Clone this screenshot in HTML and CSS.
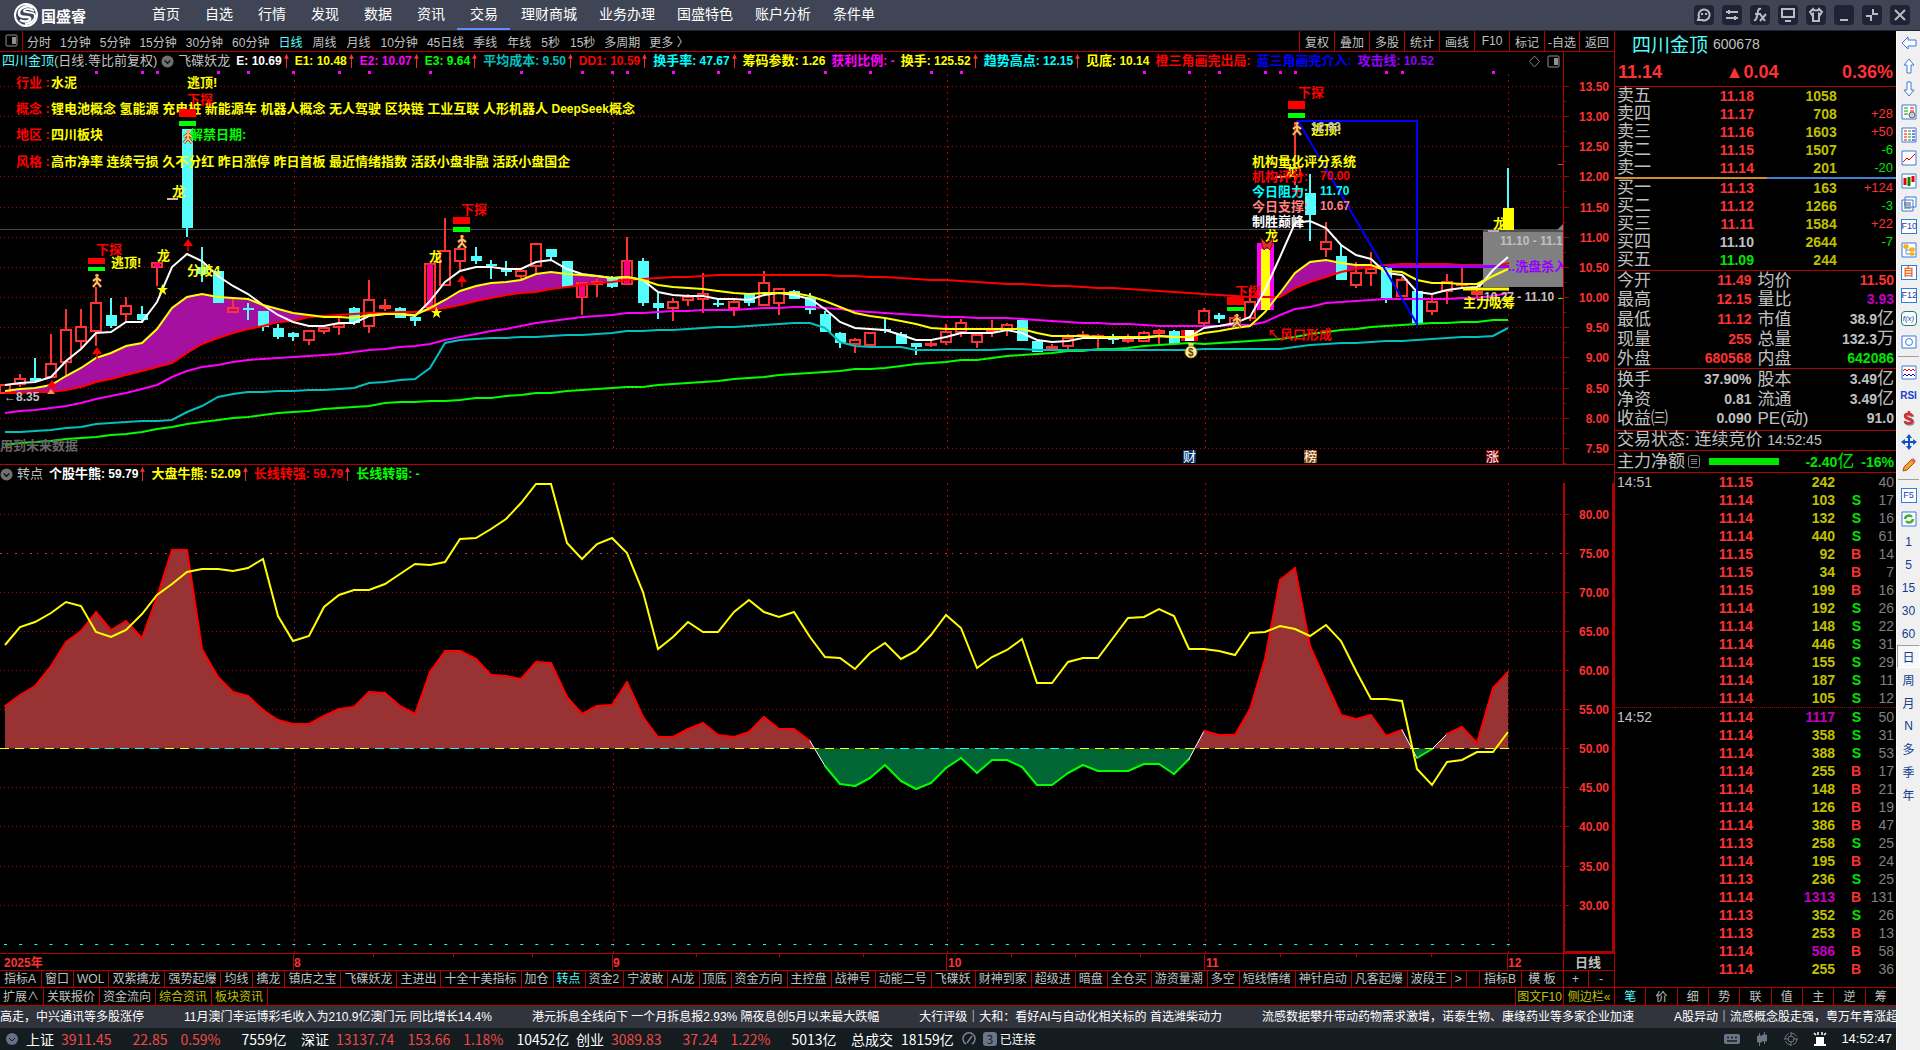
FILE: index.html
```html
<!DOCTYPE html>
<html lang="zh-CN">
<head>
  <meta charset="UTF-8" />
  <meta name="viewport" content="width=device-width, initial-scale=1.0"/>
  <title>国盛睿</title>
  <link rel="stylesheet" href="styles.css">
</head>
<body>
  <svg class="defs" width="0" height="0" aria-hidden="true">
    <symbol id="up" viewBox="0 0 5 15"><path d="M2.5 1v14" stroke="#ff3232"/><path d="M0 5L2.5 0 5 5z" fill="#ff3232"/></symbol>
    <symbol id="chev" viewBox="0 0 14 14"><circle cx="7" cy="7" r="6.5" fill="#707070"/><path d="M4 6l3 3 3-3" fill="none" stroke="#111" stroke-width="1.5"/></symbol>
    <symbol id="pane" viewBox="0 0 13 13"><rect x="1" y="1" width="11" height="11" rx="1" fill="none" stroke="#909090"/><path d="M7 3h4v7H7z" fill="#909090"/></symbol>
    <symbol id="runner" viewBox="0 0 12 15"><circle cx="6" cy="2.5" r="1.8" fill="#ffb040"/><path d="M6 4v5L2 14M6 9l4 5M6 5L2 8M6 5l4 3" fill="none" stroke="#7a3c10" stroke-width="3"/><path d="M6 4v5L2 14M6 9l4 5M6 5L2 8M6 5l4 3" fill="none" stroke="#ffc070" stroke-width="1.8"/></symbol>
    <symbol id="mark" viewBox="0 0 10 12"><path d="M5 0l5 7H0z" fill="#f00"/><path d="M5 6v6" stroke="#f00" stroke-width="1.5"/></symbol>
    <symbol id="star" viewBox="0 0 12 12"><path d="M6 0l1.7 4.3H12L8.5 7.2 10 12 6 9 2 12l1.5-4.8L0 4.3h4.3z" fill="#ff0"/></symbol>
  </svg>

  <header class="titlebar">
    <div class="logo">
      <svg width="26" height="26" viewBox="0 0 26 26" fill="none" stroke="#fff">
        <circle cx="13" cy="13" r="11" stroke-width="2"/>
        <path d="M20 6C14 2 6 6 6 11c0 4 4 4 8 4s4 3 1 4-6 0-8-1" stroke-width="2.5"/>
        <path d="M21 9c-5-3-10-2-10 0s10 0 11 4-4 9-10 9" stroke-width="2"/>
      </svg>
      <span>国盛睿</span>
    </div>
    <nav>
      <a href="#">首页</a>
      <a href="#">自选</a>
      <a href="#">行情</a>
      <a href="#">发现</a>
      <a href="#">数据</a>
      <a href="#">资讯</a>
      <a href="#" class="active">交易</a>
      <a href="#" class="wide">理财商城</a>
      <a href="#" class="wide">业务办理</a>
      <a href="#" class="wide">国盛特色</a>
      <a href="#" class="wide">账户分析</a>
      <a href="#" class="wide">条件单</a>
    </nav>
    <div class="window-buttons">
      <button aria-label="客服"><svg viewBox="0 0 20 20"><path d="M4 15l1-3a5.5 5.5 0 1 1 3 3z"/><path d="M8 8v2M12 8v2"/></svg></button>
      <button aria-label="切换"><svg viewBox="0 0 20 20"><path d="M4 7h12M4 13h12M7 5v4M13 11v4"/></svg></button>
      <button aria-label="公式"><svg viewBox="0 0 20 20"><path d="M11 4c-3-1-3 2-3.5 5S6 16 4 15M5 9h6M10 9l5 7M16 9l-6 7"/></svg></button>
      <button aria-label="屏幕"><svg viewBox="0 0 20 20"><path d="M4 4h12v8H4zM7 16h6"/></svg></button>
      <button aria-label="皮肤"><svg viewBox="0 0 20 20"><path d="M7 4L4 7l2 3 1-1v7h6V9l1 1 2-3-3-3c-1 2-5 2-6 0z"/></svg></button>
      <button aria-label="最小化"><svg viewBox="0 0 20 20"><path d="M6 15h8"/></svg></button>
      <button aria-label="还原"><svg viewBox="0 0 20 20"><path d="M4 11h5v5M11 4v5h5"/></svg></button>
      <button aria-label="关闭"><svg viewBox="0 0 20 20"><path d="M5 5l10 10M15 5L5 15"/></svg></button>
    </div>
  </header>

  <div class="workspace">
    <div class="left">
      <div class="desk">
        <main class="charts">
          <div class="period-bar">
            <button class="pane-toggle" aria-label="侧栏"><svg width="13" height="13"><use href="#pane"/></svg></button>
            <div class="periods">
              <button>分时</button><button>1分钟</button><button>5分钟</button><button>15分钟</button><button>30分钟</button><button>60分钟</button><button class="unit active">日线</button><button class="unit">周线</button><button class="unit">月线</button><button>10分钟</button><button>45日线</button><button class="unit">季线</button><button class="unit">年线</button><button class="unit">5秒</button><button>15秒</button><button>多周期</button><button>更多 〉</button>
            </div>
            <div class="chart-actions">
              <button>复权</button><button>叠加</button><button>多股</button><button>统计</button><button>画线</button><button>F10</button><button>标记</button><button>-自选</button><button>返回</button>
            </div>
          </div>

          <div class="indicator-row top-row">
            <span class="name"><span><b class="stock">四川金顶</b>(日线.等比前复权)</span><svg width="13" height="13"><use href="#chev"/></svg>飞碟妖龙</span>
            <span class="ind white"><i>E: 10.69</i><svg><use href="#up"/></svg></span>
            <span class="ind yellow"><i>E1: 10.48</i><svg><use href="#up"/></svg></span>
            <span class="ind magenta"><i>E2: 10.07</i><svg><use href="#up"/></svg></span>
            <span class="ind green"><i>E3: 9.64</i><svg><use href="#up"/></svg></span>
            <span class="ind teal">平均成本<i>: 9.50</i><svg><use href="#up"/></svg></span>
            <span class="ind red"><i>DD1: 10.59</i><svg><use href="#up"/></svg></span>
            <span class="ind cyan">换手率<i>: 47.67</i><svg><use href="#up"/></svg></span>
            <span class="ind yellow">筹码参数<i>: 1.26</i></span>
            <span class="ind magenta">获利比例<i>: -</i></span>
            <span class="ind yellow">换手<i>: 125.52</i><svg><use href="#up"/></svg></span>
            <span class="ind cyan">趋势高点<i>: 12.15</i><svg><use href="#up"/></svg></span>
            <span class="ind yellow">见底<i>: 10.14</i></span>
            <span class="ind red">橙三角画完出局<i>:</i></span>
            <span class="ind blue">蓝三角画完介入<i>:</i></span>
            <span class="ind violet">攻击线<i>: 10.52</i></span>
            <span class="row-tools">
              <svg width="13" height="13" viewBox="0 0 13 13"><path d="M6.5 1l5 5.5-5 5.5-5-5.5z" fill="none" stroke="#808080"/></svg>
              <svg width="13" height="13"><use href="#pane"/></svg>
            </span>
          </div>

          <svg class="price-chart" viewBox="0 70 1614 394" preserveAspectRatio="xMinYMin meet">
            <g id="priceGrid"></g>
            <g id="priceData"></g>

            <!-- trend triangle -->
            <path d="M1298 121h119L1417 324z" fill="none" stroke="#00f" stroke-width="2"/>

            <!-- cost range box -->
            <rect x="1483" y="232" width="80" height="55" fill="#808080"/>
            <path d="M1483 231h80" stroke="#a0a0a0"/>
            <path d="M1557 230l6-6v6z" fill="#808080"/>
            <path d="M1387 266.5h122" stroke="#9600ff" stroke-width="3"/>
            <path d="M1463 289h46" stroke="#ff0" stroke-width="3"/>
            <path d="M1479 287L1493 270 1508 257" fill="none" stroke="#fff" stroke-width="2"/>
            <path d="M1479 284L1493 276 1508 269" fill="none" stroke="#ff0" stroke-width="2"/>
            <path d="M1501 265l8-2" stroke="#f00" stroke-width="2"/>
            <clipPath id="plotClip"><rect x="0" y="70" width="1563" height="394"/></clipPath>
            <g clip-path="url(#plotClip)">
              <text class="num" x="1500" y="245" fill="#c0c0c0">11.10 - 11.10</text>
              <text x="1508" y="271" fill="#9600ff">..洗盘杀入</text>
              <text class="num" x="1484" y="301" fill="#c0c0c0">10.27 - 11.10</text>
              <text x="1463" y="307" fill="#ff0">主力吸筹</text>
            </g>

            <!-- company notes -->
            <g fill="#f00">
              <text x="16" y="87">行业 :</text>
              <text x="16" y="113">概念 :</text>
              <text x="16" y="139">地区 :</text>
              <text x="16" y="166">风格 :</text>
            </g>
            <g fill="#ff0">
              <text x="51" y="87">水泥</text>
              <text x="51" y="113">锂电池概念 氢能源 充电桩 新能源车 机器人概念 无人驾驶 区块链 工业互联 人形机器人 <tspan class="num">DeepSeek</tspan>概念</text>
              <text x="51" y="139">四川板块</text>
              <text x="51" y="166">高市净率 连续亏损 久不分红 昨日涨停 昨日首板 最近情绪指数 活跃小盘非融 活跃小盘国企</text>
              <text x="187" y="87">逃顶!</text>
              <text x="111" y="267">逃顶!</text>
              <text x="1311" y="134">逃顶!</text>
              <text x="172" y="196">龙</text>
              <text x="157" y="260">龙</text>
              <text x="429" y="261">龙</text>
              <text x="1285" y="175">龙</text>
              <text x="1265" y="240">龙</text>
              <text x="1493" y="228">龙</text>
              <text x="187" y="275">分歧4</text>
            </g>
            <text x="190" y="139" fill="#0f0">解禁日期:</text>
            <g class="num" fill="#c0c0c0">
              <text x="4" y="401">←8.35</text>
              <text x="1311" y="131">12.93</text>
            </g>
            <text x="0" y="450" fill="#686868">用到未来数据</text>

            <!-- sell signals -->
            <g fill="#f00">
              <text x="96" y="254">下探</text><rect x="88" y="258" width="17" height="6"/>
              <text x="187" y="104">下探</text><rect x="179" y="109" width="17" height="8"/>
              <text x="461" y="214">下探</text><rect x="453" y="217" width="17" height="7"/>
              <text x="1235" y="296">下探</text><rect x="1227" y="297" width="17" height="8"/>
              <text x="1298" y="97">下探</text><rect x="1288" y="101" width="17" height="8"/>
              <text x="1267" y="339">↖风口形成</text>
            </g>
            <g fill="#0f0">
              <rect x="88" y="267" width="17" height="4"/>
              <rect x="179" y="121" width="17" height="5"/>
              <rect x="453" y="227" width="17" height="5"/>
              <rect x="1227" y="307" width="17" height="4"/>
              <rect x="1288" y="113" width="17" height="5"/>
            </g>
            <use href="#runner" x="91" y="273" width="12" height="15"/>
            <use href="#runner" x="182" y="129" width="12" height="15"/>
            <use href="#runner" x="456" y="234" width="12" height="15"/>
            <use href="#runner" x="1231" y="313" width="12" height="15"/>
            <use href="#runner" x="1291" y="121" width="12" height="15"/>
            <use href="#mark" x="92" y="347" width="10" height="12"/>
            <use href="#mark" x="183" y="239" width="10" height="12"/>
            <use href="#mark" x="457" y="275" width="10" height="12"/>
            <use href="#mark" x="1292" y="185" width="10" height="12"/>
            <use href="#mark" x="47" y="380" width="10" height="12"/>
            <path d="M51 389l4 5h-8z" fill="#ff9050"/>
            <use href="#star" x="157" y="284" width="11" height="11"/>
            <use href="#star" x="431" y="307" width="11" height="11"/>

            <!-- money bag and butterfly -->
            <g>
              <path d="M1188 343h6l-1 4h-4z" fill="#e8d870"/>
              <circle cx="1191" cy="352" r="6" fill="#fff2a8" stroke="#a08820"/>
              <text class="small" x="1188" y="356" fill="#604000">$</text>
              <path d="M1267 244l-6-6 1 7 2 5 3-3 3 3 2-5 1-7z" fill="#e03020" stroke="#701008"/>
            </g>

            <!-- scoring panel -->
            <text x="1252" y="166" fill="#ff0">机构量化评分系统</text>
            <text x="1252" y="181" fill="#f00">机构评分:</text>
            <text x="1252" y="196" fill="#0ff">今日阻力:</text>
            <text x="1252" y="211" fill="#ff8080">今日支撑:</text>
            <text x="1252" y="226" fill="#fff">制胜巅峰</text>
            <g class="num">
              <text x="1320" y="180" fill="#f00">70.00</text>
              <text x="1320" y="195" fill="#0ff">11.70</text>
              <text x="1320" y="210" fill="#ff8080">10.67</text>
            </g>

            <!-- event badges -->
            <rect x="1183" y="450" width="13" height="13" fill="#003870"/>
            <rect x="1304" y="450" width="13" height="13" fill="#884400"/>
            <rect x="1486" y="450" width="13" height="13" fill="#800000"/>
            <g class="badge" fill="#fff">
              <text x="1183" y="461">财</text>
              <text x="1304" y="461">榜</text>
              <text x="1486" y="461">涨</text>
            </g>
          </svg>

          <div class="indicator-row sub-row">
            <span class="name"><svg width="13" height="13"><use href="#chev"/></svg>转点</span>
            <span class="ind white">个股牛熊<i>: 59.79</i><svg><use href="#up"/></svg></span>
            <span class="ind yellow">大盘牛熊<i>: 52.09</i><svg><use href="#up"/></svg></span>
            <span class="ind red">长线转强<i>: 59.79</i><svg><use href="#up"/></svg></span>
            <span class="ind green">长线转弱<i>: -</i></span>
          </div>

          <svg class="trend-chart" viewBox="0 484 1614 470" preserveAspectRatio="xMinYMin meet">
            <g id="trendGrid"></g>
            <g id="trendData"></g>
          </svg>

          <div class="date-axis">
            <svg viewBox="0 954 1614 16" preserveAspectRatio="xMinYMin meet">
              <path d="M373.5 954v3M453.5 954v3M532.5 954v3M696.5 954v3M779.5 954v3M863.5 954v3M1011.5 954v3M1075.5 954v3M1140.5 954v3M1280.5 954v3M1356.5 954v3M1431.5 954v3M293.5 954v16M612.5 954v16M946.5 954v16M1204.5 954v16M1507.5 954v16M1563.5 954v16" stroke="#b00000"/>
              <g class="num" fill="#ff3232">
                <text x="4" y="967">2025年</text>
                <text x="294" y="967">8</text>
                <text x="613" y="967">9</text>
                <text x="948" y="967">10</text>
                <text x="1206" y="967">11</text>
                <text x="1508" y="967">12</text>
              </g>
              <text x="1575" y="967" fill="#c0c0c0">日线</text>
            </svg>
          </div>

          <div class="tabs">
            <button class="first">指标A</button><button>窗口</button><button>WOL</button><button>双紫擒龙</button><button>强势起爆</button><button>均线</button><button>擒龙</button><button>镇店之宝</button><button>飞碟妖龙</button><button>主进出</button><button>十全十美指标</button><button>加仓</button><button class="active">转点</button><button>资金2</button><button>宁波敢</button><button>AI龙</button><button>顶底</button><button>资金方向</button><button>主控盘</button><button>战神号</button><button>动能二号</button><button>飞碟妖</button><button>财神到家</button><button>超级进</button><button>暗盘</button><button>全仓买</button><button>游资量潮</button><button>多空</button><button>短线情绪</button><button>神针启动</button><button>凡客起爆</button><button>波段王</button><button>&gt;</button>
            <div class="tabs-end">
              <button class="b">指标B</button><button class="b">模 板</button><button class="zoom">+</button><button class="zoom">-</button>
            </div>
          </div>
          <div class="tabs">
            <button>扩展∧</button><button>关联报价</button><button>资金流向</button><button class="gold">综合资讯</button><button class="gold">板块资讯</button>
            <div class="tabs-end">
              <button class="gold f10">图文F10</button><button class="gold side">侧边栏«</button>
            </div>
          </div>
        </main>

        <aside class="quote">
          <div class="quote-head">
            <div class="quote-name"><strong>四川金顶</strong><span>600678</span></div>
            <div class="quote-price"><span>11.14</span><span>▲0.04</span><span>0.36%</span></div>
          </div>
          <table class="book">
            <tr><th>卖五</th><td class="up">11.18</td><td class="vol">1058</td><td></td></tr>
            <tr><th>卖四</th><td class="up">11.17</td><td class="vol">708</td><td class="diff up">+28</td></tr>
            <tr><th>卖三</th><td class="up">11.16</td><td class="vol">1603</td><td class="diff up">+50</td></tr>
            <tr><th>卖二</th><td class="up">11.15</td><td class="vol">1507</td><td class="diff down">-6</td></tr>
            <tr><th>卖一</th><td class="up">11.14</td><td class="vol">201</td><td class="diff down">-20</td></tr>
          </table>
          <div class="ratio"><span></span></div>
          <table class="book">
            <tr><th>买一</th><td class="up">11.13</td><td class="vol">163</td><td class="diff up">+124</td></tr>
            <tr><th>买二</th><td class="up">11.12</td><td class="vol">1266</td><td class="diff down">-3</td></tr>
            <tr><th>买三</th><td class="up">11.11</td><td class="vol">1584</td><td class="diff up">+22</td></tr>
            <tr><th>买四</th><td>11.10</td><td class="vol">2644</td><td class="diff down">-7</td></tr>
            <tr><th>买五</th><td class="down">11.09</td><td class="vol">244</td><td></td></tr>
          </table>
          <table class="stats">
            <tr><th>今开</th><td class="up">11.49</td><th>均价</th><td class="up">11.50</td></tr>
            <tr><th>最高</th><td class="up">12.15</td><th>量比</th><td class="big">3.93</td></tr>
            <tr><th>最低</th><td class="up">11.12</td><th>市值</th><td>38.9<em>亿</em></td></tr>
            <tr><th>现量</th><td class="up">255</td><th>总量</th><td>132.3<em>万</em></td></tr>
            <tr><th>外盘</th><td class="up">680568</td><th>内盘</th><td class="down">642086</td></tr>
          </table>
          <table class="stats short">
            <tr><th>换手</th><td>37.90%</td><th>股本</th><td>3.49<em>亿</em></td></tr>
            <tr><th>净资</th><td>0.81</td><th>流通</th><td>3.49<em>亿</em></td></tr>
            <tr><th>收益㈢</th><td>0.090</td><th>PE(动)</th><td>91.0</td></tr>
          </table>
          <div class="state">交易状态: 连续竞价 <span>14:52:45</span></div>
          <div class="flow">
            <span>主力净额</span>
            <svg width="12" height="13" viewBox="0 0 12 13" fill="none" stroke="#808080"><rect x=".5" y=".5" width="11" height="12" rx="2"/><path d="M3 4.5h6M3 6.5h6M3 8.5h6"/></svg>
            <div class="flow-bar"></div>
            <b class="down">-2.40<em>亿</em></b><b class="down">-16%</b>
          </div>
          <table class="ticks">
            <tr><th>14:51</th><td class="up">11.15</td><td class="vol">242</td><td></td><td>40</td></tr>
            <tr><th></th><td class="up">11.14</td><td class="vol">103</td><td class="down">S</td><td>17</td></tr>
            <tr><th></th><td class="up">11.14</td><td class="vol">132</td><td class="down">S</td><td>16</td></tr>
            <tr><th></th><td class="up">11.14</td><td class="vol">440</td><td class="down">S</td><td>61</td></tr>
            <tr><th></th><td class="up">11.15</td><td class="vol">92</td><td class="up">B</td><td>14</td></tr>
            <tr><th></th><td class="up">11.15</td><td class="vol">34</td><td class="up">B</td><td>7</td></tr>
            <tr><th></th><td class="up">11.15</td><td class="vol">199</td><td class="up">B</td><td>16</td></tr>
            <tr><th></th><td class="up">11.14</td><td class="vol">192</td><td class="down">S</td><td>26</td></tr>
            <tr><th></th><td class="up">11.14</td><td class="vol">148</td><td class="down">S</td><td>22</td></tr>
            <tr><th></th><td class="up">11.14</td><td class="vol">446</td><td class="down">S</td><td>31</td></tr>
            <tr><th></th><td class="up">11.14</td><td class="vol">155</td><td class="down">S</td><td>29</td></tr>
            <tr><th></th><td class="up">11.14</td><td class="vol">187</td><td class="down">S</td><td>11</td></tr>
            <tr><th></th><td class="up">11.14</td><td class="vol">105</td><td class="down">S</td><td>12</td></tr>
            <tr class="minute"><th>14:52</th><td class="up">11.14</td><td class="big">1117</td><td class="down">S</td><td>50</td></tr>
            <tr><th></th><td class="up">11.14</td><td class="vol">358</td><td class="down">S</td><td>31</td></tr>
            <tr><th></th><td class="up">11.14</td><td class="vol">388</td><td class="down">S</td><td>53</td></tr>
            <tr><th></th><td class="up">11.14</td><td class="vol">255</td><td class="up">B</td><td>17</td></tr>
            <tr><th></th><td class="up">11.14</td><td class="vol">148</td><td class="up">B</td><td>21</td></tr>
            <tr><th></th><td class="up">11.14</td><td class="vol">126</td><td class="up">B</td><td>19</td></tr>
            <tr><th></th><td class="up">11.14</td><td class="vol">386</td><td class="up">B</td><td>47</td></tr>
            <tr><th></th><td class="up">11.13</td><td class="vol">258</td><td class="down">S</td><td>25</td></tr>
            <tr><th></th><td class="up">11.14</td><td class="vol">195</td><td class="up">B</td><td>24</td></tr>
            <tr><th></th><td class="up">11.13</td><td class="vol">236</td><td class="down">S</td><td>25</td></tr>
            <tr><th></th><td class="up">11.14</td><td class="big">1313</td><td class="up">B</td><td>131</td></tr>
            <tr><th></th><td class="up">11.13</td><td class="vol">352</td><td class="down">S</td><td>26</td></tr>
            <tr><th></th><td class="up">11.13</td><td class="vol">253</td><td class="up">B</td><td>13</td></tr>
            <tr><th></th><td class="up">11.14</td><td class="big">586</td><td class="up">B</td><td>58</td></tr>
            <tr><th></th><td class="up">11.14</td><td class="vol">255</td><td class="up">B</td><td>36</td></tr>
          </table>
          <div class="quote-tabs">
            <button class="active">笔</button><button>价</button><button>细</button><button>势</button><button>联</button><button>值</button><button>主</button><button>逆</button><button>筹</button>
          </div>
        </aside>
      </div>

      <div class="news">
        <a href="#">高走，中兴通讯等多股涨停</a>
        <a href="#">11月澳门幸运博彩毛收入为210.9亿澳门元 同比增长14.4%</a>
        <a href="#">港元拆息全线向下 一个月拆息报2.93% 隔夜息创5月以来最大跌幅</a>
        <a href="#">大行评级｜大和：看好AI与自动化相关标的 首选潍柴动力</a>
        <a href="#">流感数据攀升带动药物需求激增，诺泰生物、康缘药业等多家企业加速</a>
        <a href="#">A股异动｜流感概念股走强，粤万年青涨超</a>
      </div>

      <footer class="status">
        <svg class="status-menu" width="12" height="12" viewBox="0 0 12 12"><circle cx="6" cy="6" r="6" fill="#687084"/><path d="M3 5l3 3 3-3" fill="none" stroke="#151c20"/></svg>
        <div class="index"><span>上证</span><b>3911.45</b><b class="chg">22.85</b><b class="pct">0.59%</b><span class="amt">7559亿</span></div>
        <div class="index"><span>深证</span><b>13137.74</b><b class="chg">153.66</b><b class="pct">1.18%</b><span class="amt">10452亿</span></div>
        <div class="index"><span>创业</span><b>3089.83</b><b class="chg">37.24</b><b class="pct">1.22%</b><span class="amt">5013亿</span></div>
        <span class="total">总成交</span><span class="total">18159亿</span>
        <svg class="gauge" width="14" height="14" viewBox="0 0 14 14" fill="none" stroke="#7a8296" stroke-width="1.5"><path d="M4 12a6 6 0 1 1 6 0M5 11l5-7"/></svg>
        <span class="count">3</span><span class="link">已连接</span>
        <div class="status-icons">
          <svg width="16" height="14" viewBox="0 0 16 14"><rect y="2" width="16" height="10" rx="2" fill="#6c7488"/><path d="M3 5.5h2M7 5.5h2M11 5.5h2M3 9h10" stroke="#151c20" stroke-width="1.5"/></svg>
          <svg width="14" height="14" viewBox="0 0 14 14" stroke="#6c7488"><path d="M4.5 1v13M9.5 0v12"/><path d="M2.5 4h4v6h-4zM7.5 3h4v6h-4z" fill="#6c7488"/></svg>
          <svg width="14" height="14" viewBox="0 0 14 14" fill="none" stroke="#6c7488"><circle cx="7" cy="7" r="6" stroke-dasharray="7 2"/><circle cx="7" cy="7" r="3"/><path d="M7 0v5M7 9v5M0 7h5M9 7h5"/></svg>
          <svg width="14" height="14" viewBox="0 0 14 14"><path d="M3 5h8v7H3zM1 12h12v2H1z" fill="#fff"/><path d="M1 1l2 2M5 0v3M9 0v3M13 1l-2 2" stroke="#fff" stroke-width="1.5"/></svg>
        </div>
        <time>14:52:47</time>
      </footer>
    </div>

    <aside class="toolbar">
      <button aria-label="后退"><svg viewBox="0 0 16 16"><path d="M1 8l6-6v3h8v6H7v3z" fill="#fff"/></svg></button>
      <button aria-label="上一只"><svg viewBox="0 0 16 16"><path d="M8 1l5 6h-3v8H6V7H3z" fill="#fff"/></svg></button>
      <button aria-label="下一只"><svg viewBox="0 0 16 16"><path d="M8 15l5-6h-3V1H6v8H3z" fill="#fff"/></svg></button>
      <button aria-label="报价"><svg viewBox="0 0 16 16"><path class="box" d="M1 1h14v14H1z"/><path d="M3 4h4M3 7h4M3 10h4" stroke="#090"/><path d="M9 4h4M9 7h4" stroke="#f00"/><circle cx="11" cy="11" r="3" fill="#ccc" stroke="#666"/></svg></button>
      <button aria-label="列表"><svg viewBox="0 0 16 16"><path class="box" d="M1 1h14v14H1z"/><path d="M3 4h3M3 7h3M3 10h3M3 13h3" stroke="#f00"/><path d="M7 4h3M7 7h3M7 10h3M7 13h3" stroke="#090"/><path d="M11 4h3M11 7h3M11 10h3M11 13h3" stroke="#00c"/></svg></button>
      <button aria-label="分时图"><svg viewBox="0 0 16 16"><path class="box" d="M1 1h14v14H1z"/><path d="M2 12l4-4 2 2 6-6" stroke="#e00"/></svg></button>
      <button aria-label="K线图"><svg viewBox="0 0 16 16"><path class="box" d="M1 1h14v14H1z"/><path d="M4 5v7M12 3v6" stroke="#e00" stroke-width="3"/><path d="M8 4v9" stroke="#080" stroke-width="3"/></svg></button>
      <button aria-label="资料"><svg viewBox="0 0 16 16"><path class="box" d="M4 1h11v10H4zM1 4h11v11H1z"/><path d="M3 7h7M3 9h7M3 12h7" stroke="#555"/></svg></button>
      <button class="key"><span>F10</span></button>
      <button aria-label="板块"><svg viewBox="0 0 16 16"><path class="box" d="M1 1h14v14H1z"/><path d="M5 6v6h4M5 8h4" stroke="#59f"/><path d="M3 3h4v3H3zM9 6h4v3H9zM9 11h4v2H9z" fill="#ffc020" stroke="#f0a000"/></svg></button>
      <button class="key orange"><span>自</span></button>
      <button class="key"><span>F12</span></button>
      <button class="key round"><span>f(x)</span></button>
      <button aria-label="圈选"><svg viewBox="0 0 16 16"><path class="box" d="M1 2h14v12H1z"/><circle cx="8" cy="8" r="3.5" fill="none"/></svg></button>
      <hr>
      <button aria-label="指标"><svg viewBox="0 0 16 16"><path class="box" d="M1 1h14v13H1z"/><path d="M2 6l2-2 2 2 2-2 2 2 2-2 2 2" stroke="#e00"/><path d="M2 11l2-2 2 2 2-2 2 2 2-2 2 2" stroke="#00c"/></svg></button>
      <button class="rsi">RSI</button>
      <button aria-label="资金"><svg viewBox="0 0 16 16"><path d="M12 6c-1-3-7-3-7 0s7 2 7 5-7 3-7 0" stroke="#909090" stroke-width="3"/><path d="M11 5c-1-3-7-3-7 0s7 2 7 5-7 3-7 0M8 0v3" stroke="#d03030" stroke-width="2.5"/></svg></button>
      <button aria-label="移动"><svg viewBox="0 0 16 16"><path d="M8 0l3 4H9v3h3V5l4 3-4 3V9H9v3h2l-3 4-3-4h2V9H4v2L0 8l4-3v2h3V4H5z" fill="#1050c8" stroke="none"/></svg></button>
      <button aria-label="画笔"><svg viewBox="0 0 16 16"><path d="M2 14l1-4 8-8 3 3-8 8z" fill="#f8a030" stroke="#a05010"/><path d="M10 3l2-2 3 3-2 2z" fill="#e06060" stroke="none"/></svg></button>
      <hr>
      <button class="key"><span>F5</span></button>
      <button aria-label="刷新"><svg viewBox="0 0 16 16"><path class="box" d="M1 1h14v14H1z"/><path d="M4 8a4 4 0 0 1 7-2M12 8a4 4 0 0 1-7 2" stroke="#40b030" stroke-width="2.5"/></svg></button>
      <button>1</button>
      <button>5</button>
      <button>15</button>
      <button>30</button>
      <button>60</button>
      <button class="pressed">日</button>
      <button>周</button>
      <button>月</button>
      <button>N</button>
      <button>多</button>
      <button>季</button>
      <button>年</button>
    </aside>
  </div>

  <script src="chart.js"></script>
</body>
</html>
```

FILE: styles.css
```css
* {
  margin: 0;
  padding: 0;
  box-sizing: border-box;
}

body {
  height: 100vh;
  display: flex;
  flex-direction: column;
  background: #000;
  color: #c0c0c0;
  font-family: "Liberation Sans", "Noto Sans CJK SC", sans-serif;
  font-size: 12px;
  overflow: hidden;
}

button {
  background: none;
  border: none;
  color: inherit;
  font: inherit;
  white-space: nowrap;
  cursor: pointer;
}

a {
  color: inherit;
  text-decoration: none;
}

i, em {
  font-style: normal;
}

.defs {
  position: absolute;
}

.up { color: #ff3232; }
.down { color: #00e600; }
.big { color: #c000c0; }
.vol { color: #c0c000; }

/* title bar */
.titlebar {
  display: flex;
  flex: none;
  height: 31px;
  background: #404556;
  border-bottom: 1px solid #20242e;
  color: #fff;
}

.logo {
  display: flex;
  align-items: center;
  gap: 2px;
  width: 139px;
  padding-left: 13px;
  font-size: 15px;
  font-weight: bold;
}

nav {
  display: flex;
  font-size: 14px;
  line-height: 29px;
}

nav a {
  padding: 0 12px 0 13px;
  height: 30px;
}

nav a.wide {
  padding: 0 11px;
}

nav a.active {
  border-bottom: 2px solid #5f8cff;
}

.window-buttons {
  display: flex;
  align-items: center;
  gap: 8px;
  margin-left: auto;
  padding-right: 10px;
}

.window-buttons button {
  width: 20px;
  height: 20px;
  border-radius: 4px;
  background: #1e2433;
}

.window-buttons svg {
  display: block;
  fill: none;
  stroke: #b8bcc6;
  stroke-width: 2;
}

/* layout */
.workspace {
  display: flex;
  flex: 1;
  min-height: 0;
}

.left {
  display: flex;
  flex-direction: column;
  flex: 1;
  min-width: 0;
}

.desk {
  display: flex;
  flex: 1;
  min-height: 0;
}

.charts {
  display: flex;
  flex-direction: column;
  flex: 1;
  min-width: 0;
}

.period-bar {
  display: flex;
  flex: none;
  height: 21px;
  border-bottom: 1px solid #b00000;
}

.pane-toggle {
  width: 23px;
  padding-top: 2px;
  border-right: 1px solid #b00000;
}

.periods {
  display: flex;
  gap: 9px;
  padding-left: 4px;
}

.periods .unit {
  padding-right: 1px;
}

.periods .active {
  color: #54fcfc;
}

.chart-actions {
  display: flex;
  margin-left: auto;
}

.chart-actions button {
  width: 35px;
  border-left: 1px solid #b00000;
}

.indicator-row {
  display: flex;
  flex: none;
  align-items: center;
  gap: 6px;
  height: 18px;
  padding-left: 2px;
  font-size: 13px;
  line-height: 16px;
  white-space: nowrap;
}

.sub-row {
  height: 19px;
  padding-left: 0;
  border-top: 1px solid #b00000;
}

.name {
  display: flex;
  align-items: center;
  gap: 4px;
}

.stock {
  color: #54fcfc;
  font-weight: normal;
}

.ind {
  display: flex;
  align-items: baseline;
  font-weight: bold;
}

.ind i {
  font-size: 12px;
  white-space: pre;
}

.ind svg {
  align-self: center;
  width: 5px;
  height: 14px;
  margin-left: 2px;
}

.white { color: #fff; }
.yellow { color: #ff0; }
.magenta { color: #f0f; }
.green { color: #0f0; }
.teal { color: #00c0c0; }
.red { color: #f00; }
.cyan { color: #0ff; }
.blue { color: #00f; }
.violet { color: #9600ff; }

.row-tools {
  display: flex;
  gap: 6px;
  margin-left: auto;
  padding-right: 54px;
}

.price-chart {
  flex: 394 1 0;
  width: 100%;
  min-height: 0;
  overflow: visible;
}

.trend-chart {
  flex: 470 1 0;
  width: 100%;
  min-height: 0;
}

.charts text {
  font-size: 13px;
  font-weight: bold;
}

.charts .num,
.charts .num text {
  font-size: 12px;
}

.charts .badge text {
  font-weight: normal;
}

.charts .small {
  font-size: 10px;
}

.date-axis {
  flex: none;
  height: 17px;
  border-top: 1px solid #b00000;
}

.date-axis svg {
  display: block;
  width: 100%;
  height: 16px;
}

.tabs {
  display: flex;
  flex: none;
  height: 17px;
  border-top: 1px solid #b00000;
}

.tabs + .tabs {
  height: 19px;
  border-bottom: 1px solid #b00000;
}

.tabs button {
  padding: 0 4px 0 3px;
  border-right: 1px solid #b00000;
  line-height: 16px;
}

.tabs .first {
  padding: 0 5px 0 4px;
}

.tabs .active {
  color: #54fcfc;
}

.tabs .gold {
  color: #c0c000;
}

.tabs-end {
  display: flex;
  margin-left: auto;
  border-left: 1px solid #b00000;
}

.tabs-end .b {
  width: 42px;
}

.tabs-end .zoom {
  width: 25px;
}

.tabs-end .f10 {
  width: 48px;
  padding: 0;
}

.tabs-end .side {
  width: 50px;
  padding: 0;
}

.tabs-end button:last-child {
  border-right: none;
}

/* quote panel */
.quote {
  display: flex;
  flex-direction: column;
  flex: none;
  width: 282px;
  border-left: 1px solid #b00000;
}

.quote table {
  width: 100%;
  border-collapse: collapse;
  table-layout: fixed;
  font-size: 14px;
  font-weight: bold;
}

.quote th {
  font-size: 17px;
  font-weight: normal;
  text-align: left;
  white-space: nowrap;
}

.quote td {
  text-align: right;
}

.quote em {
  font-size: 17px;
  font-weight: normal;
}

.quote-head {
  height: 56px;
  border-bottom: 1px solid #b00000;
}

.quote-name {
  display: flex;
  align-items: center;
  gap: 5px;
  height: 25px;
  padding-left: 17px;
  font-size: 14px;
}

.quote-name strong {
  color: #54fcfc;
  font-size: 19px;
  font-weight: normal;
}

.quote-price {
  display: flex;
  justify-content: space-between;
  padding: 6px 3px 0;
  color: #ff3232;
  font-size: 18px;
  font-weight: bold;
}

.book tr {
  height: 18px;
}

.book th, .book td {
  width: 58px;
  line-height: 18px;
  height: 18px;
}

.book th {
  padding-left: 2px;
}

.book td:nth-child(2) {
  width: 78px;
}

.book td:nth-child(3) {
  width: 81px;
}

.book .diff {
  padding-right: 3px;
  font-size: 13px;
  font-weight: normal;
}

.ratio {
  flex: none;
  height: 2px;
  background: #4080d0;
}

.ratio span {
  display: block;
  width: 54%;
  height: 2px;
  background: #d09020;
}

.stats {
  margin-top: 1px;
  border-top: 1px solid #b00000;
}

.stats.short {
  margin-top: 0;
}

.stats th, .stats td {
  width: 66px;
  height: 19px;
  line-height: 19px;
}

.stats th {
  padding-left: 2px;
}

.stats td + th {
  padding-left: 4px;
}

.stats th + td {
  padding-right: 2px;
}

.stats td:nth-child(2) {
  width: 72px;
}

.stats td:nth-child(4) {
  width: 76px;
}

.state {
  flex: none;
  height: 20px;
  margin-top: 2px;
  padding-left: 2px;
  border-top: 1px solid #b00000;
  font-size: 17px;
  line-height: 18px;
}

.state span {
  font-size: 14px;
}

.flow {
  display: flex;
  flex: none;
  align-items: center;
  height: 23px;
  padding: 0 2px;
  border-top: 1px solid #b00000;
  border-bottom: 1px solid #b00000;
  font-size: 17px;
  line-height: 20px;
}

.flow svg {
  margin: 0 9px 0 3px;
}

.flow-bar {
  flex: 0 1 70px;
  height: 7px;
  background: #00e600;
}

.flow b {
  margin-left: auto;
  font-size: 14px;
}

.flow b + b {
  margin-left: 7px;
}

.ticks th, .ticks td {
  height: 18px;
  line-height: 18px;
}

.quote .ticks th {
  width: 60px;
  padding-left: 2px;
  font-size: 14px;
}

.ticks td:nth-child(2) {
  width: 78px;
}

.ticks td:nth-child(3) {
  width: 82px;
}

.ticks td:nth-child(4) {
  width: 26px;
}

.ticks td:nth-child(5) {
  color: #808080;
  font-weight: normal;
  padding-right: 2px;
}

.ticks .minute {
  border-top: 1px dotted #b00000;
}

.quote-tabs {
  display: flex;
  flex: none;
  height: 19px;
  margin-top: auto;
  border-top: 1px solid #b00000;
  border-bottom: 1px solid #b00000;
}

.quote-tabs button {
  flex: 1;
  line-height: 16px;
}

.quote-tabs button + button {
  border-left: 1px solid #b00000;
}

.quote-tabs .active {
  color: #54fcfc;
}

/* news and status */
.news {
  display: flex;
  flex: none;
  gap: 40px;
  height: 22px;
  overflow: hidden;
  background: #32343d;
  color: #fff;
  line-height: 22px;
  white-space: nowrap;
}

.status {
  display: flex;
  flex: none;
  align-items: center;
  height: 22px;
  padding: 0 4px 0 6px;
  background: #151c20;
  color: #fff;
  font-family: "Noto Sans CJK SC", sans-serif;
  font-size: 14px;
  line-height: 22px;
  white-space: nowrap;
}

.status-menu {
  margin-right: 8px;
}

.index {
  display: flex;
  width: 275px;
  text-align: right;
}

.index b {
  margin-left: 7px;
  color: #f04848;
  font-weight: normal;
}

.index .chg {
  width: 49px;
}

.index .pct {
  width: 46px;
}

.index .amt {
  width: 66px;
}

.total {
  margin-right: 8px;
}

.count {
  width: 14px;
  height: 14px;
  margin: 0 3px 0 7px;
  border-radius: 3px;
  background: #6c7488;
  color: #151c20;
  font-size: 12px;
  line-height: 14px;
  text-align: center;
}

.link {
  font-size: 12px;
}

.status-icons {
  display: flex;
  gap: 15px;
  margin: 0 14px 0 auto;
}

.status time {
  font-family: "Liberation Sans", sans-serif;
  font-size: 13px;
}

/* right toolbar */
.toolbar {
  flex: none;
  width: 24px;
  background: #f0f0f0;
  border-left: 1px solid #fff;
  color: #103c90;
}

.toolbar button {
  display: flex;
  align-items: center;
  justify-content: center;
  width: 23px;
  height: 23px;
}

.toolbar svg {
  width: 16px;
  height: 16px;
  fill: none;
  stroke: #3a78e0;
}

.toolbar .box {
  fill: #fff;
  stroke: #3a78e0;
}

.toolbar hr {
  height: 2px;
  margin: 3px 1px;
  border: none;
  border-top: 1px solid #a0a0a0;
}

.key span {
  width: 16px;
  height: 15px;
  border: 1px solid #2a80e0;
  background: #fff;
  color: #1a40b0;
  font-size: 9px;
  line-height: 13px;
}

.orange span {
  color: #f07030;
  font-size: 11px;
  font-weight: bold;
}

.round span {
  border-color: #108080;
  border-radius: 4px;
  font-size: 8px;
  font-style: italic;
}

.toolbar .rsi {
  color: #2040d0;
  font-size: 10px;
  font-weight: bold;
}

.toolbar .pressed {
  border: 1px solid #fff;
  border-top-color: #a0a0a0;
  border-left-color: #a0a0a0;
  background: #f8f8f8;
}
```

FILE: chart.js
```js
const NS = "http://www.w3.org/2000/svg";
const step = 15.18;
const x = i => 5 + Math.round(i * step);

function add(parent, tag, attrs, text) {
  const el = document.createElementNS(NS, tag);
  for (const k in attrs) el.setAttribute(k, attrs[k]);
  if (text) el.textContent = text;
  parent.appendChild(el);
  return el;
}

function points(ys) {
  return ys.map((y, i) => x(i) + "," + y).join(" ");
}

function line(parent, ys, color, width) {
  add(parent, "polyline", { points: points(ys), fill: "none", stroke: color, "stroke-width": width });
}

// high, body top, body bottom, low; r = rising, c = falling, p = rising with a pink core
const candles = `r384,384,394,394 r374,378,385,387 c358,378,381,383 r334,363,378,378 r309,329,363,376
r309,326,342,348 r287,302,332,346 c298,315,326,328 r297,305,315,322 c306,314,320,323
p262,262,268,286 d199 c129,129,228,237 c247,267,274,282 c271,271,303,303
r299,307,313,313 c303,308,309,320 c311,311,327,331 c324,328,337,339 c332,333,337,341
r330,330,341,345 r327,327,332,334 r317,323,328,335 c307,308,323,325 r280,299,327,333
r299,305,309,311 c307,308,318,318 c317,317,321,326 p263,263,308,308 r218,250,286,286
r247,248,262,271 c247,256,261,264 c260,264,266,279 c261,269,272,276 r268,270,277,279
r243,243,267,275 c249,249,257,260 c261,261,287,287 p282,282,298,315 r279,281,285,297
c276,278,287,288 p237,260,285,285 c258,261,303,306 c293,303,308,319 r298,301,309,321
r294,296,301,306 r273,293,300,313 c299,303,304,307 r300,301,309,316 c294,294,303,306
r271,282,306,306 r288,288,304,315 c290,291,299,299 c293,297,310,314 c311,314,332,332
c332,333,343,348 r338,339,345,353 r332,332,346,346 c318,329,331,333 c332,334,344,344
c343,343,347,355 r341,343,346,347 r324,331,343,345 r319,322,333,337 r332,334,343,348
r320,330,333,337 r323,324,330,336 c320,320,341,341 c341,341,352,352 r344,346,349,349
r334,337,347,349 r331,334,336,337 r334,335,336,348 c334,338,339,344 r334,339,341,343
r331,332,342,342 r329,330,334,345 c330,331,344,344 w330,330,341,341 r308,310,324,325
c313,315,319,323 r315,317,325,327 r288,301,319,321 y243,243,310,310 d177
r122,167,177,185 c174,193,215,241 r222,241,250,257 c245,256,280,280 r262,272,286,288
r252,268,274,286 c267,267,298,303 r277,279,297,297 c283,291,323,323 r295,301,312,315
r274,281,292,304 r267,283,285,287 r287,291,295,297 d231 l168,208,230,230`.split(/\s+/);

const white = [385,383,382,377,361,349,333,332,322,322,302,267,254,261,276,286,294,305,315,322,
326,326,323,323,316,314,314,316,301,282,271,267,267,269,269,262,260,269,274,276,
278,277,280,292,295,296,296,299,299,300,295,293,295,299,309,322,328,329,330,335,
340,340,337,333,333,333,330,333,340,342,341,338,338,338,338,338,336,337,337,328,
326,323,317,290,257,223,221,228,245,255,259,273,275,292,294,290,288,287,270,257];

const yellow = [391,389,388,385,376,368,358,353,346,343,329,308,297,294,297,298,299,305,309,313,
315,317,317,318,315,314,314,315,308,300,291,286,283,282,280,274,272,274,275,276,
278,277,280,285,287,288,289,291,293,294,293,293,293,296,301,307,313,316,318,321,
324,328,329,329,329,329,329,329,333,336,336,336,337,337,337,337,336,337,337,333,
331,328,326,312,293,273,262,260,263,265,265,271,272,280,283,283,284,284,276,269];

const red = [393,393,392,392,390,387,382,379,375,371,367,363,353,344,338,333,329,326,322,321,
317,316,315,314,313,313,312,312,310,308,305,301,298,295,293,292,289,287,285,283,
282,280,279,278,277,277,276,275,275,275,275,275,275,275,275,276,276,277,277,278,
279,280,280,281,282,283,284,284,285,286,286,287,288,288,289,290,291,292,293,294,
295,296,297,297,297,288,282,277,272,269,267,265,264,264,264,264,265,265,265,263];

const magenta = [413,411,410,408,406,403,399,396,393,389,385,377,371,367,365,362,360,359,358,357,
356,355,354,352,350,349,347,346,344,340,337,334,331,329,326,323,321,319,317,316,
315,313,313,312,311,311,310,310,310,309,308,308,307,307,308,309,311,312,313,314,
315,316,317,317,318,318,318,319,320,321,322,323,323,324,324,325,326,326,326,326,
326,325,325,322,315,309,307,303,302,301,300,299,299,299,299,299,298,298,296,293];

const teal = [432,432,431,430,428,427,424,423,422,421,421,420,412,406,397,394,392,392,391,391,
390,390,389,388,383,382,380,379,368,343,340,339,338,338,337,337,336,335,335,334,
333,331,331,330,330,329,328,327,327,326,325,324,323,323,328,342,346,347,347,347,
350,350,350,350,350,350,349,349,350,350,350,350,350,350,350,350,350,350,350,349,
349,349,349,349,349,347,345,344,343,343,342,341,341,340,339,338,337,337,336,328];

const green = [445,443,442,441,439,438,437,435,434,432,429,427,424,422,420,418,417,415,413,412,
411,409,408,407,406,403,402,402,401,401,400,398,398,396,395,393,393,391,390,389,
388,387,387,385,384,383,382,381,379,378,377,375,374,373,372,371,369,369,368,366,
364,363,362,360,360,358,356,355,354,353,351,351,349,349,348,346,345,344,343,344,
343,342,341,340,339,337,334,332,330,329,327,326,325,324,323,323,322,322,320,320];

const signalBars = [6,9,10,14,16,19,22,24,28,34,38,40,41,44,47,49,54,57,61,63,75,78,80,83,84,85,91,92,98];
const months = [294, 613, 947, 1205, 1508];

function drawGrid(g, top, bottom) {
  months.forEach(mx => add(g, "path", { d: `M${mx + 0.5} ${top}V${bottom}`, stroke: "#b00000", "stroke-dasharray": "2 4" }));
}

function axisLabel(g, y, value) {
  add(g, "text", { class: "num", x: 1609, y: y + 4, fill: "#ff3232", "text-anchor": "end" }, value.toFixed(2));
}

function drawPrice() {
  const grid = document.getElementById("priceGrid");
  const g = document.getElementById("priceData");

  drawGrid(grid, 74, 450);
  for (let n = 0; n <= 12; n++) {
    const y = Math.round(86 + n * 30.15);
    add(grid, "path", { d: `M0 ${y + 0.5}H1563`, stroke: "#b00000", "stroke-dasharray": "1 3" });
    add(grid, "path", { d: `M1564 ${y + 0.5}h5M1564 ${y + 15.5}h2`, stroke: "#b00000" });
    axisLabel(grid, y + 1, 13.5 - n / 2);
  }
  add(grid, "path", { d: "M1563.5 52V464", stroke: "#b00000" });
  add(grid, "path", { d: "M0 229.5H1563", stroke: "#484848" });
  add(grid, "path", { d: "M1558 164.5h5", stroke: "#ff3232" });
  add(grid, "path", { d: "M1558 298.5h5", stroke: "#0f0" });
  signalBars.forEach(i => add(grid, "rect", { x: x(i) - 1, y: 71, width: 3, height: 3, fill: "#f0f" }));

  // band between the two averages
  [[0, 20], [28, 41], [84, 90]].forEach(([a, b]) => {
    let pts = [];
    for (let i = a; i <= b; i++) pts.push(x(i) + "," + yellow[i]);
    for (let i = b; i >= a; i--) pts.push(x(i) + "," + red[i]);
    add(g, "polygon", { points: pts.join(" "), fill: "#a610a0" });
  });

  candles.forEach((c, i) => {
    const kind = c[0];
    const [high, top, bottom, low] = c.slice(1).split(",").map(Number);
    const cx = x(i);
    if (kind === "d") {
      add(g, "path", { d: `M${cx - 5} ${high}h11`, stroke: "#e0b0b0", "stroke-width": 2 });
      return;
    }
    const color = kind === "c" || kind === "l" ? "#54fcfc" : "#ff3232";
    add(g, "path", { d: `M${cx} ${high}V${top}M${cx} ${bottom}V${low}`, stroke: color, "stroke-width": 2 });
    if (kind === "c") {
      add(g, "rect", { x: cx - 5, y: top, width: 11, height: Math.max(bottom - top, 2), fill: color });
    } else if (kind === "y") {
      add(g, "rect", { x: cx - 8, y: top, width: 17, height: bottom - top, fill: "#f0f" });
      add(g, "rect", { x: cx - 4, y: top + 6, width: 9, height: bottom - top - 6, fill: "#ff0" });
    } else if (kind === "w") {
      add(g, "rect", { x: cx - 8, y: top, width: 17, height: bottom - top, fill: "#f00" });
      add(g, "rect", { x: cx - 4, y: top, width: 9, height: bottom - top, fill: "#fff" });
    } else if (kind === "l") {
      add(g, "rect", { x: cx - 5, y: top, width: 11, height: bottom - top, fill: "#ff0" });
    } else {
      add(g, "rect", { x: cx - 5, y: top + 1, width: 10, height: Math.max(bottom - top - 2, 1), fill: "none", stroke: color, "stroke-width": 2 });
      if (kind === "p") add(g, "rect", { x: cx - 3, y: top + 1, width: 6, height: bottom - top - 2, fill: "#ff0080" });
    }
  });

  line(g, green, "#0f0", 2);
  line(g, teal, "#00c0c0", 2);
  line(g, magenta, "#f0f", 2);
  line(g, red, "#f00", 2);
  line(g, white, "#fff", 2);
  line(g, yellow, "#ff0", 2);
}

const market = [646,628,623,614,603,607,633,638,631,615,596,585,573,570,570,572,569,560,617,642,
637,608,596,591,591,585,575,565,566,563,540,539,530,520,504,485,485,544,560,545,
539,554,593,650,638,623,633,633,613,601,613,618,613,638,658,659,670,654,644,660,
652,636,616,629,669,658,651,640,684,684,663,659,659,639,619,618,610,617,650,650,
652,656,634,633,627,630,637,626,642,672,700,700,702,770,786,763,761,753,753,733];

const stock = [707,696,687,667,643,632,613,631,622,639,598,551,551,650,678,693,697,711,721,725,
725,717,710,708,693,694,707,715,673,652,652,660,676,677,680,663,664,698,715,707,
706,683,718,738,738,730,724,736,738,733,718,730,730,742,767,785,787,779,766,782,
790,784,769,759,774,761,761,768,786,786,774,766,772,772,772,765,765,775,760,732,
736,736,710,660,581,569,647,683,716,720,716,737,731,759,750,735,728,744,689,673];

function drawTrend() {
  const grid = document.getElementById("trendGrid");
  const g = document.getElementById("trendData");
  const mid = 749.5;

  drawGrid(grid, 484, 954);
  [515, 554, 593, 632, 671, 710, 749, 788, 827, 867, 906].forEach((y, n) => {
    const dash = n === 1 ? "2 5 1 7" : "1 3";
    add(grid, "path", { d: `M0 ${y + 0.5}H1563`, stroke: n === 1 ? "#f03030" : "#b00000", "stroke-dasharray": dash });
    add(grid, "path", { d: `M1564 ${y + 0.5}h5M1564 ${y + 20.5}h2`, stroke: "#b00000" });
    axisLabel(grid, y + 1, 80 - n * 5);
  });
  add(grid, "path", { d: "M1564 484V953H1613V484", fill: "none", stroke: "#b00000", "stroke-width": 2 });

  const end = x(99);
  const area = `5,${mid} ${points(stock)} ${end},${mid}`;
  const defs = add(g, "defs", {});
  const above = add(defs, "clipPath", { id: "above" });
  add(above, "rect", { x: 0, y: 484, width: 1564, height: mid - 484 });
  const below = add(defs, "clipPath", { id: "below" });
  add(below, "rect", { x: 0, y: mid, width: 1564, height: 200 });
  add(g, "polygon", { points: area, fill: "#993333", "clip-path": "url(#above)" });
  add(g, "polygon", { points: area, fill: "#006633", "clip-path": "url(#below)" });

  for (let i = 1; i < stock.length; i++) {
    const a = stock[i - 1], b = stock[i];
    let color = "#fff";
    if (a < mid && b < mid) color = "#f00";
    if (a > mid && b > mid) color = "#0f0";
    add(g, "path", { d: `M${x(i - 1)} ${a}L${x(i)} ${b}`, stroke: color, "stroke-width": color === "#fff" ? 1 : 2, "stroke-linecap": "round" });
  }

  add(g, "path", { d: `M0 ${mid}H${end + 4}`, stroke: "#ff0", "stroke-dasharray": "9 6" });
  add(g, "path", { d: `M90 ${mid}H165M195 ${mid}H285M375 ${mid}H495M645 ${mid}H735M885 ${mid}H1080`, stroke: "#0ff", "stroke-dasharray": "9 6" });
  line(g, market, "#ff0", 2);
  add(g, "path", { d: `M4 945.5H${end + 3}`, stroke: "#0ff", "stroke-dasharray": "3 12.18" });
}

drawPrice();
drawTrend();
```
